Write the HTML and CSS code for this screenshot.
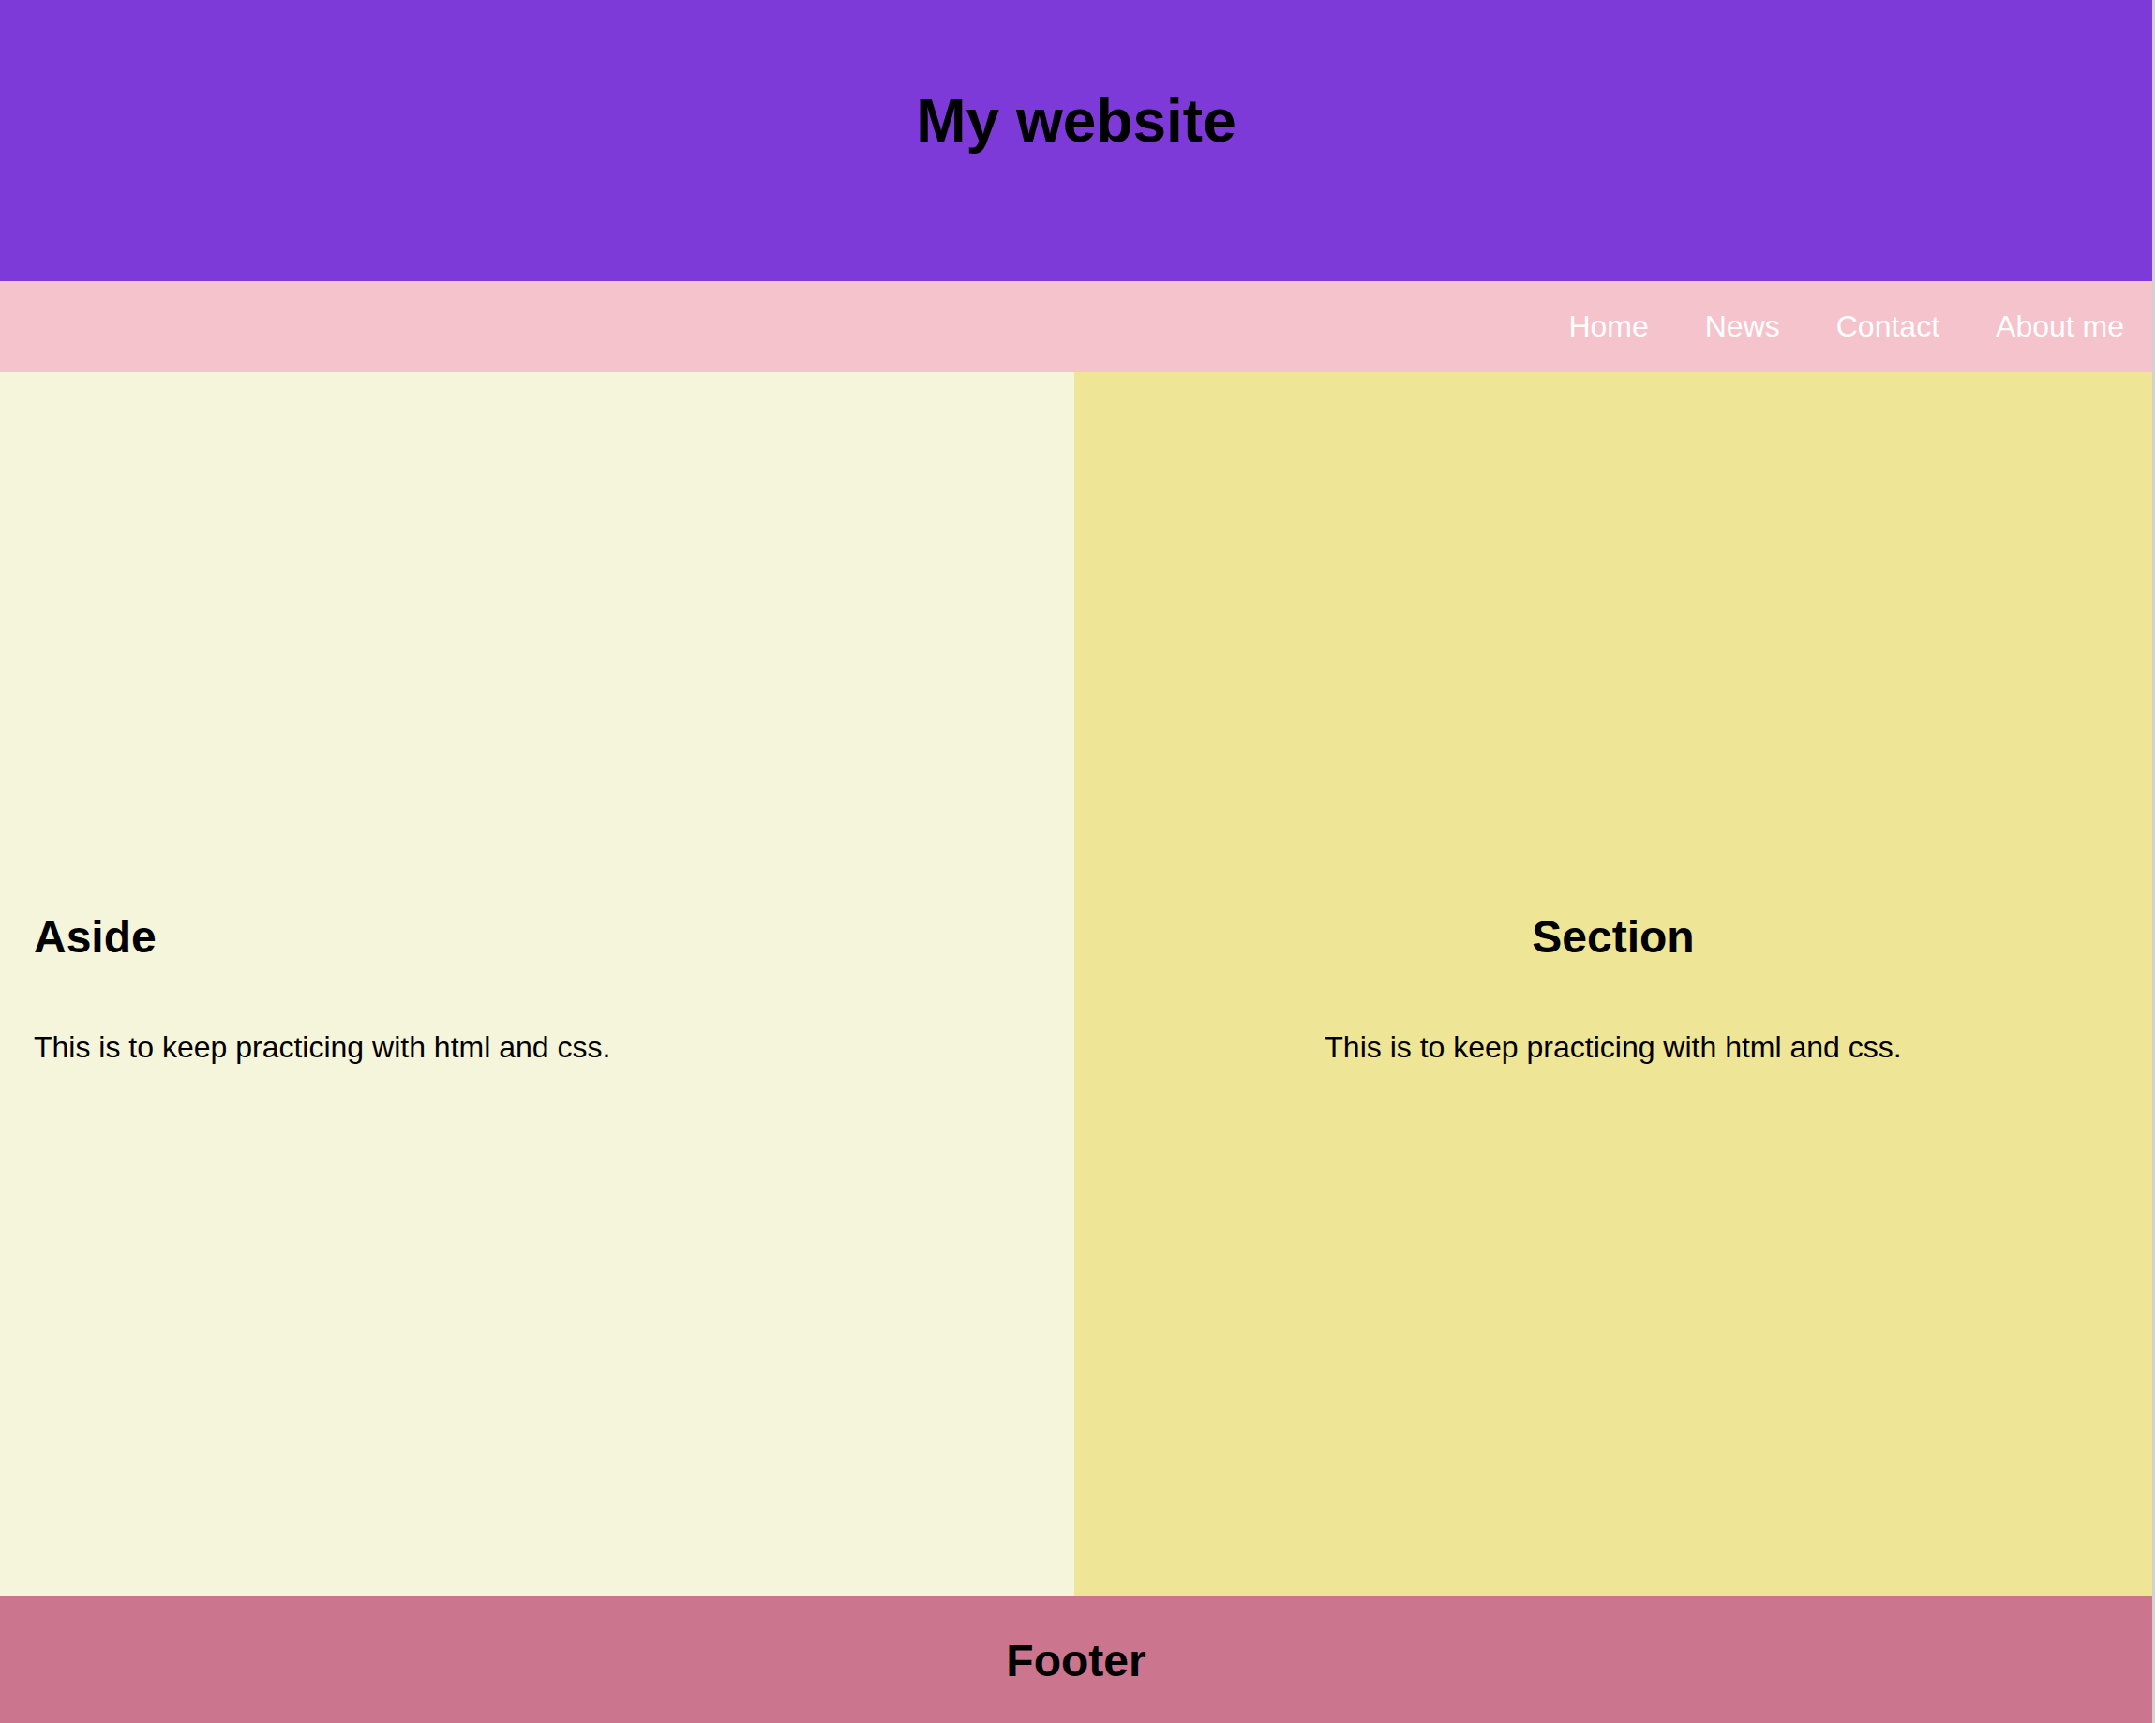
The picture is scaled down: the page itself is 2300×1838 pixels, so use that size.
FILE: index.html
```html
<!DOCTYPE html>
<html lang="en">
<head>
<meta charset="utf-8">
<title>My website</title>
<link rel="stylesheet" href="styles.css">
</head>
<body>
<div class="page">
  <header class="site-header">
    <h1 class="site-title">My website</h1>
  </header>
  <nav class="site-nav">
    <a href="#" class="nav-link">Home</a>
    <a href="#" class="nav-link">News</a>
    <a href="#" class="nav-link">Contact</a>
    <a href="#" class="nav-link">About me</a>
  </nav>
  <main class="content">
    <aside class="panel panel-aside">
      <h2 class="panel-title">Aside</h2>
      <p class="panel-text">This is to keep practicing with html and css.</p>
    </aside>
    <section class="panel panel-section">
      <h2 class="panel-title">Section</h2>
      <p class="panel-text">This is to keep practicing with html and css.</p>
    </section>
  </main>
  <footer class="site-footer">
    <h2 class="footer-title">Footer</h2>
  </footer>
</div>
</body>
</html>
```

FILE: styles.css
```css
html, body {
  margin: 0;
  padding: 0;
  background: #ffffff;
}

body {
  font-family: "Liberation Sans", Arial, sans-serif;
  color: #000;
}

.page {
  width: 2296px;
  border-right: 3px solid #d2d2d2;
}

.site-header {
  box-sizing: border-box;
  height: 300px;
  padding-top: 92px;
  background: #7e3ad8;
  text-align: center;
}

.site-title {
  margin: 0;
  font-size: 64px;
  font-weight: bold;
  line-height: normal;
}

.site-nav {
  box-sizing: border-box;
  height: 97px;
  background: #f5c3cb;
  display: flex;
  justify-content: flex-end;
  align-items: center;
}

.nav-link {
  color: #ffffff;
  text-decoration: none;
  font-size: 32px;
  padding: 0 30px;
}

.content {
  display: grid;
  grid-template-columns: 1146px 1fr;
  height: 1306px;
}

.panel {
  display: flex;
  flex-direction: column;
  justify-content: center;
  box-sizing: border-box;
  padding-top: 8px;
}

.panel-aside {
  background: #f5f5dc;
  padding-left: 36px;
}

.panel-section {
  background: #eee596;
  text-align: center;
}

.panel-title {
  margin: 0;
  font-size: 48px;
  font-weight: bold;
  line-height: normal;
}

.panel-text {
  margin: 72px 0 0;
  font-size: 32px;
  line-height: normal;
}

.site-footer {
  box-sizing: border-box;
  height: 135px;
  padding-top: 41px;
  background: #cc758f;
  text-align: center;
}

.footer-title {
  margin: 0;
  font-size: 48px;
  font-weight: bold;
  line-height: normal;
}
```
